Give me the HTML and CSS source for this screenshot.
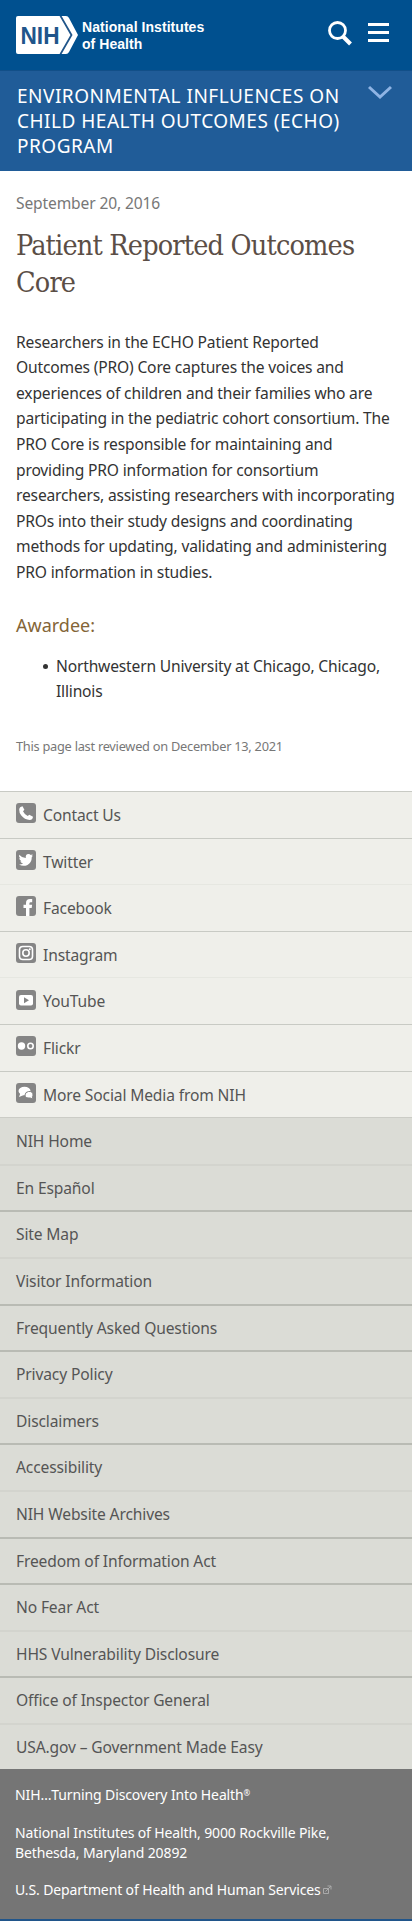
FILE: index.html
```html
<!DOCTYPE html>
<html lang="en">
<head>
<meta charset="utf-8">
<meta name="viewport" content="width=device-width">
<title>Patient Reported Outcomes Core | NIH</title>
<link rel="stylesheet" href="styles.css">
</head>
<body>
<header class="top">
  <a class="brand">
    <svg class="mark" viewBox="0 0 62 38" width="62" height="38">
      <path d="M2 0H44L56 19 44 38H2Q0 38 0 36V2Q0 0 2 0Z" fill="#fff"/>
      <path d="M44 0H50Q52 0 53 2L62 19 53 36Q52 38 50 38H44L55 19Z" fill="#fff"/>
      <path d="M44 -1 55.500 19 44 39" fill="none" stroke="#20558a" stroke-width="1.800"/>
      <text class="mark-text" x="4.500" y="27.500" textLength="39" lengthAdjust="spacingAndGlyphs">NIH</text>
    </svg>
    <span class="brand-name">National Institutes<br>of Health</span>
  </a>
  <div class="tools">
    <svg viewBox="0 0 24 25" width="24" height="25" fill="none" stroke="#fff"><circle cx="9.500" cy="9.500" r="8" stroke-width="2.800"/><path d="M15 15.500 22.500 23" stroke-width="4"/></svg>
    <svg viewBox="0 0 21 19" width="21" height="19" fill="#fff"><path d="M0 0H21V3H0ZM0 8H21V11H0ZM0 16H21V19H0Z"/></svg>
  </div>
</header>
<nav class="program">
  <span class="program-name">Environmental influences on<br>Child Health Outcomes (ECHO)<br>Program</span>
  <svg class="chevron" viewBox="0 0 24 16" width="24" height="16" fill="none" stroke="#8fb4e4" stroke-width="3"><path d="M1 2 12 12 23 2"/></svg>
</nav>
<main class="content">
  <p class="date">September 20, 2016</p>
  <h1 class="title">Patient Reported Outcomes<br>Core</h1>
  <p class="copy">Researchers in the ECHO Patient Reported<br>Outcomes (PRO) Core captures the voices and<br>experiences of children and their families who are<br>participating in the pediatric cohort consortium. The<br>PRO Core is responsible for maintaining and<br>providing PRO information for consortium<br>researchers, assisting researchers with incorporating<br>PROs into their study designs and coordinating<br>methods for updating, validating and administering<br>PRO information in studies.</p>
  <h2 class="subhead">Awardee:</h2>
  <ul class="awardees"><li>Northwestern University at Chicago, Chicago,<br>Illinois</li></ul>
  <p class="reviewed">This page last reviewed on December 13, 2021</p>
</main>
<footer>
  <ul class="menu social">
    <li><svg class="icon" viewBox="0 0 20 20"><rect width="20" height="20" rx="3"/><path class="w" d="M6.500 3.200 8.400 6.800 7 8.300Q8.400 11.400 11.700 13L13.300 11.700 17 13.800Q16.500 17 13.700 17 8.500 16.500 5.300 12.500 3 9.500 3.200 6.500 3.500 3.700 6.500 3.200Z"/></svg>Contact Us</li>
    <li><svg class="icon" viewBox="0 0 20 20"><rect width="20" height="20" rx="3"/><path class="w" d="M3.200 4.700Q5.900 7.900 9.800 8 9.300 4.200 12.500 4 13.800 4 14.800 4.900L16.700 4.200 15.600 5.900 17.100 5.500 15.800 7Q15.800 12.500 11.500 14.900 7 17 3 14.400 5.500 14.500 7.100 13.200 4.900 13 4.300 11.200H5.500Q3.200 10.200 3.200 8.100L4.400 8.500Q2.500 6.800 3.200 4.700Z"/></svg>Twitter</li>
    <li class="soft"><svg class="icon" viewBox="0 0 20 20"><rect width="20" height="20" rx="3"/><path class="w" d="M10 20V12H7.500V8.800H10V7Q10 3 14 3H16.200V6.200H14.700Q13.400 6.200 13.400 7.400V8.800H16.100L15.700 12H13.400V20Z"/></svg>Facebook</li>
    <li><svg class="icon" viewBox="0 0 20 20"><rect width="20" height="20" rx="3"/><g class="o"><rect x="3.500" y="3.500" width="13" height="13" rx="3.300"/><circle cx="10" cy="10" r="3.200"/></g><circle class="w" cx="13.800" cy="6.200" r="1"/></svg>Instagram</li>
    <li class="soft"><svg class="icon" viewBox="0 0 20 20"><rect width="20" height="20" rx="3"/><rect class="w" x="3" y="5" width="14" height="10.500" rx="2"/><path d="M8 7.200 13 10.200 8 13.200Z"/></svg>YouTube</li>
    <li><svg class="icon" viewBox="0 0 20 20"><rect width="20" height="20" rx="3"/><circle class="w" cx="5.500" cy="10" r="3.700"/><circle class="o" cx="14.500" cy="10" r="2.700"/></svg>Flickr</li>
    <li><svg class="icon" viewBox="0 0 20 20"><rect width="20" height="20" rx="3"/><ellipse class="w" cx="8.500" cy="8" rx="6" ry="4.200"/><path class="w" d="M4.500 10 3 14 8 12Z"/><path class="s" d="M12.500 8.500Q17 8 17 12 17 13 16.400 13.700L17 16 14.300 15Q9 15.500 9 12 9.200 9 12.500 8.500Z"/></svg>More Social Media from NIH</li>
  </ul>
  <ul class="menu links">
    <li>NIH Home</li>
    <li class="soft">En Español</li>
    <li>Site Map</li>
    <li class="soft">Visitor Information</li>
    <li>Frequently Asked Questions</li>
    <li>Privacy Policy</li>
    <li class="soft">Disclaimers</li>
    <li>Accessibility</li>
    <li class="soft">NIH Website Archives</li>
    <li>Freedom of Information Act</li>
    <li>No Fear Act</li>
    <li class="soft">HHS Vulnerability Disclosure</li>
    <li>Office of Inspector General</li>
    <li class="soft">USA.gov – Government Made Easy</li>
  </ul>
  <div class="legal">
    <p>NIH…Turning Discovery Into Health<sup>®</sup></p>
    <p>National Institutes of Health, 9000 Rockville Pike,<br>Bethesda, Maryland 20892</p>
    <p>U.S. Department of Health and Human Services<svg class="ext" viewBox="0 0 10 10" width="10" height="10" fill="none" stroke="#aaa"><path d="M1.500 3.500H6.500V8.500H1.500ZM3.500 6.500 9 1M5.500 1H9V4.500"/></svg></p>
  </div>
</footer>
</body>
</html>
```
FILE: styles.css
```css
* { box-sizing: border-box; }
body { margin: 0; background: #fff; color: #333; font: 15.600px/25.6px "Noto Sans", sans-serif; }
p, h1, h2, ul { margin: 0; padding: 0; font-weight: normal; }
.top { height: 70px; padding: 16px 23px 0 16px; background: #00508f; display: flex; justify-content: space-between; }
.brand { display: flex; gap: 4px; color: #fff; }
.mark { display: block; }
.mark-text { font: bold 24px "Liberation Sans", sans-serif; fill: #20558a; }
.brand-name { font: bold 14px/17px "Liberation Sans", sans-serif; padding-top: 3px; letter-spacing: 0.05px; white-space: nowrap; }
.tools { display: flex; gap: 16px; padding-top: 5px; }
.tools svg:last-child { margin-top: 2px; }
.program { height: 101px; padding: 13px 20px 0 17px; background: #205c98; color: #fff; display: flex; justify-content: space-between; border-top: 1px solid #124f88; }
.program-name { font-size: 19px; line-height: 25px; letter-spacing: 0.5px; text-transform: uppercase; white-space: nowrap; }
.chevron { margin-top: 1px; flex: none; }
.content { height: 620px; padding: 20px 16px 0; white-space: nowrap; }
.date { color: #777; letter-spacing: -0.14px; }
.title { font: 28.500px/37px "DejaVu Serif Condensed", "DejaVu Serif", serif; color: #5b4e46; margin-top: 10px; letter-spacing: -0.82px; }
.copy { margin-top: 29px; letter-spacing: -0.17px; }
.subhead { font-size: 18px; line-height: 27px; color: #846537; margin-top: 26px; }
.awardees { list-style: none; padding-left: 40px; margin-top: 15px; letter-spacing: -0.18px; }
.awardees li { position: relative; }
.awardees li::before { content: ""; position: absolute; left: -13.500px; top: 10.500px; width: 5px; height: 5px; border-radius: 50%; background: #333; }
.reviewed { font-size: 12.800px; line-height: 20px; letter-spacing: -0.26px; color: #777; margin-top: 31px; }
.menu { list-style: none; color: #555; letter-spacing: -0.14px; }
.menu li { height: 46.600px; padding: 2px 16px 0; display: flex; align-items: center; }
.social { background: #efefea; }
.social li { border-top: 1px solid #c8cac4; }
.social .soft { border-top-color: #e6e7e1; }
.links { background: #dbdcd6; }
.links li { border-top: 2px solid #b9bbb4; padding-top: 1px; }
.links li:first-child { border-top: 1px solid #cbccc6; padding-top: 2px; }
.links .soft { border-top-color: #d3d4ce; }
.icon { width: 20px; height: 20px; fill: #858585; margin: -5px 7px 0 0; flex: none; }
.icon .w { fill: #fff; }
.icon .s { fill: #fff; stroke: #858585; stroke-width: 1; }
.icon .o { fill: none; stroke: #fff; stroke-width: 1.600; }
.legal { height: 152px; padding: 16px 15px 0; background: #757575; border-bottom: 2px solid #20558a; color: #fff; font-size: 14px; line-height: 20px; letter-spacing: -0.12px; white-space: nowrap; }
.legal p + p { margin-top: 18px; }
.legal p:last-child { margin-top: 17px; }
.legal sup { font-size: 8px; line-height: 0; vertical-align: 4px; }
.ext { margin-left: 1px; }
```
